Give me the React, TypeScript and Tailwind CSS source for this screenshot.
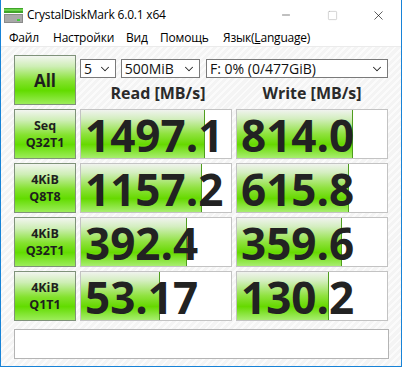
import { ChevronDown, Minus, Square, X } from 'lucide-react'

const rows = [
  { l1: 'Seq', l2: 'Q32T1', read: '1497.1', rv: 1497.1, write: '814.0', wv: 814.0 },
  { l1: '4KiB', l2: 'Q8T8', read: '1157.2', rv: 1157.2, write: '615.8', wv: 615.8 },
  { l1: '4KiB', l2: 'Q32T1', read: '392.4', rv: 392.4, write: '359.6', wv: 359.6 },
  { l1: '4KiB', l2: 'Q1T1', read: '53.17', rv: 53.17, write: '130.2', wv: 130.2 },
]

// log scale, fitted to the bars
const pct = (v: number) => Math.min(100, 53 + 20.6 * (Math.log10(v) - 1.726))

function GreenButton({ children }: { children: React.ReactNode }) {
  return (
    <div className="h-[50px] border border-[#7f927a] bg-[linear-gradient(to_bottom,#f2f5f0_0%,#cdeeb4_22%,#84e22e_52%,#62dc00_72%,#9ced5a_100%)] flex flex-col items-center justify-center text-[#1e1e1e] font-bold leading-[17px]">
      {children}
    </div>
  )
}

function Cell({ text, value }: { text: string; value: number }) {
  return (
    <div className="relative h-[50px] border border-[#c3c3c3] bg-white overflow-hidden">
      <div
        className="absolute left-0 top-0 bottom-0 border-r border-[#4f9d1e] bg-[linear-gradient(to_bottom,#f0f3ee_0%,#d4eec0_18%,#8fe23e_50%,#66d900_72%,#a8ee70_100%)]"
        style={{ width: `${pct(value)}%` }}
      />
      <div className="relative pl-[4px] text-[44px] leading-[50px] font-bold text-[#222] whitespace-nowrap">
        {text}
      </div>
    </div>
  )
}

function Select({ w, label }: { w: string; label: string }) {
  return (
    <div className={`${w} h-[19px] border border-[#7a7a7a] bg-white flex items-center justify-between pl-[3px] pr-[3px] text-[14px] text-[#111]`}>
      <span className="leading-[17px]">{label}</span>
      <ChevronDown size={14} strokeWidth={1.75} className="text-[#222]" />
    </div>
  )
}

export default function App() {
  return (
    <div className="w-[402px] h-[367px] bg-white border-l border-r border-b border-[#1883d7] flex flex-col overflow-hidden font-['Open_Sans','Noto_Sans',sans-serif]">
      <div className="h-[30px] flex items-center shrink-0">
        <svg width="19" height="15" viewBox="0 0 19 15" className="ml-[3px]">
          <rect x="0" y="0" width="19" height="5" fill="#3fa52a" />
          <rect x="0" y="1" width="19" height="2" fill="#6cd04c" />
          <rect x="0" y="6" width="19" height="9" fill="#8a8a8a" />
          <rect x="1" y="7" width="17" height="7" fill="#a8a8a8" />
          <rect x="13" y="11" width="3" height="2" fill="#3fd03a" />
        </svg>
        <span className="ml-[4px] text-[12px] tracking-[-0.2px] text-black leading-none">CrystalDiskMark 6.0.1 x64</span>
        <div className="ml-auto flex items-center">
          <div className="w-[46px] h-[30px] flex items-center justify-center">
            <Minus size={12} strokeWidth={1} className="text-black" />
          </div>
          <div className="w-[46px] h-[30px] flex items-center justify-center">
            <Square size={11} strokeWidth={1} className="text-[#a0a0a0]" />
          </div>
          <div className="w-[46px] h-[30px] flex items-center justify-center">
            <X size={15} strokeWidth={1} className="text-black" />
          </div>
        </div>
      </div>
      <div className="h-[15px] flex items-center pl-[8px] text-[12px] tracking-[-0.2px] text-black leading-none shrink-0">
        <span className="w-[44px]">Файл</span>
        <span className="w-[73px]">Настройки</span>
        <span className="w-[34px]">Вид</span>
        <span className="w-[63px]">Помощь</span>
        <span>
          Язык(<span className="underline">L</span>anguage)
        </span>
      </div>
      <div className="flex-1 mt-[1px] border-t border-[#ebebeb] bg-[repeating-linear-gradient(135deg,#f4f4f4_0px,#f4f4f4_3px,#fbfbfb_3px,#fbfbfb_5px)] pt-[8px] pl-[13px]">
        <div className="grid grid-cols-[62px_152px_152px] auto-rows-[50px] gap-[4px]">
          <GreenButton>
            <span className="text-[17px]">All</span>
          </GreenButton>
          <div className="col-span-2 flex flex-col">
            <div className="flex items-center mt-[4px] gap-[5px]">
              <Select w="w-[36px]" label="5" />
              <Select w="w-[80px]" label="500MiB" />
              <div className="ml-[1px]">
                <Select w="w-[182px]" label="F: 0% (0/477GiB)" />
              </div>
            </div>
            <div className="flex mt-[4px] text-[16px] font-bold text-[#2a2a2a] leading-[22px]">
              <div className="w-[156px] text-center">Read [MB/s]</div>
              <div className="w-[152px] text-center">Write [MB/s]</div>
            </div>
          </div>
          {rows.map((r) => (
            <div key={r.l1 + r.l2} className="contents">
              <GreenButton>
                <span className="text-[12.5px]">{r.l1}</span>
                <span className="text-[12.5px]">{r.l2}</span>
              </GreenButton>
              <Cell text={r.read} value={r.rv} />
              <Cell text={r.write} value={r.wv} />
            </div>
          ))}
        </div>
        <div className="mt-[8px] w-[375px] h-[30px] border border-[#b4b4b4] bg-white" />
      </div>
    </div>
  )
}
